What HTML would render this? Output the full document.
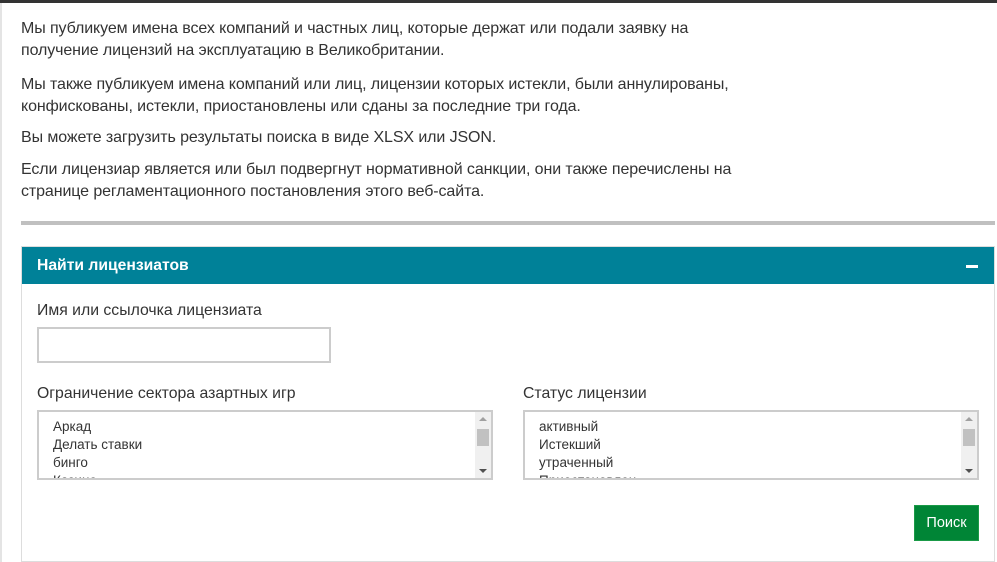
<!DOCTYPE html>
<html><head><meta charset="utf-8"><style>
*{box-sizing:border-box;margin:0;padding:0}
body{width:997px;height:562px;overflow:hidden;background:#fff;font-family:"Liberation Sans",Arial,sans-serif;color:#333;position:relative}
.top{position:absolute;left:0;top:0;width:997px;height:3px;background:#333}
.lb{position:absolute;left:0;top:3px;width:2px;height:559px;background:#e4e4e4}
p{position:absolute;left:21px;font-size:16px;line-height:22px;width:730px;letter-spacing:-0.1px}
.bar{position:absolute;left:21px;top:221px;width:974px;height:4px;background:#c0c0c0}
.panel{position:absolute;left:21px;top:246px;width:974px;height:316px;border:1px solid #ddd}
.hd{position:absolute;left:0;top:0;width:972px;height:37px;background:#008198;color:#fff;font-weight:bold;font-size:15.7px;padding:10px 15px}
.minus{position:absolute;right:16px;top:18px;width:12px;height:3px;background:#fff}
.lbl{position:absolute;font-size:15.8px}
.inp{position:absolute;left:15px;top:80px;width:294px;height:36px;border:2px solid #ccc}
.sel{position:absolute;top:163px;width:456px;height:70px;border:2px solid #ccc;font-size:13.5px;line-height:18px;padding:6px 0 0 14px;overflow:hidden}
.sb{position:absolute;right:0;top:0;width:16px;height:66px;background:#f0f0f0}
.th{position:absolute;right:2px;top:17px;width:12px;height:17px;background:#c1c1c1}
.au{position:absolute;left:4px;top:5px;border:4px solid transparent;border-bottom:4px solid #a0a0a0;border-top:0}
.ad{position:absolute;left:4px;bottom:5px;border:4px solid transparent;border-top:4px solid #505050;border-bottom:0}
.btn{position:absolute;left:892px;top:258px;width:65px;height:36px;background:#008536;border:1px solid #1a9a47;color:#fff;font-size:14.5px;text-align:center;line-height:34px}
</style></head><body>
<div class="top"></div><div class="lb"></div>
<p style="top:18px">Мы публикуем имена всех компаний и частных лиц, которые держат или подали заявку на получение лицензий на эксплуатацию в Великобритании.</p>
<p style="top:74px">Мы также публикуем имена компаний или лиц, лицензии которых истекли, были аннулированы, конфискованы, истекли, приостановлены или сданы за последние три года.</p>
<p style="top:127px">Вы можете загрузить результаты поиска в виде XLSX или JSON.</p>
<p style="top:159px">Если лицензиар является или был подвергнут нормативной санкции, они также перечислены на странице регламентационного постановления этого веб-сайта.</p>
<div class="bar"></div>
<div class="panel">
<div class="hd">Найти лицензиатов<div class="minus"></div></div>
<div class="lbl" style="left:15px;top:55px">Имя или ссылочка лицензиата</div>
<div class="inp"></div>
<div class="lbl" style="left:15px;top:138px">Ограничение сектора азартных игр</div>
<div class="sel" style="left:15px">Аркад<br>Делать ставки<br>бинго<br>Казино<div class="sb"><div class="au"></div><div class="th"></div><div class="ad"></div></div></div>
<div class="lbl" style="left:501px;top:138px">Статус лицензии</div>
<div class="sel" style="left:501px">активный<br>Истекший<br>утраченный<br>Приостановлен<div class="sb"><div class="au"></div><div class="th"></div><div class="ad"></div></div></div>
<div class="btn">Поиск</div>
</div>
</body></html>
